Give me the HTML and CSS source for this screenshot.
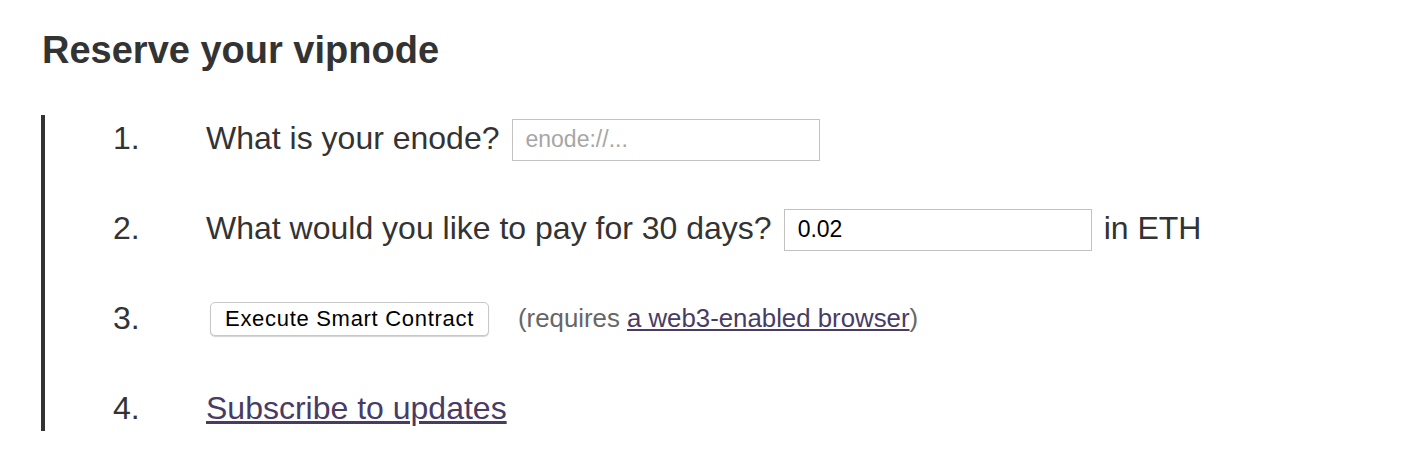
FILE: index.html
```html
<!DOCTYPE html>
<html lang="en">
<head>
    <meta charset="UTF-8">
    <meta name="viewport" content="width=device-width, initial-scale=1.0">
    <title>Reserve your vipnode</title>
    <link rel="stylesheet" href="styles.css">
</head>
<body>
    <div class="page">
        <h1>Reserve your vipnode</h1>
        <ol class="steps">
            <li class="step">
                <span class="step-num">1.</span>
                <div class="step-body">
                    <label for="enode">What is your enode?</label>
                    <input type="text" id="enode" class="field" placeholder="enode://...">
                </div>
            </li>
            <li class="step">
                <span class="step-num">2.</span>
                <div class="step-body">
                    <label for="amount">What would you like to pay for 30 days?</label>
                    <input type="text" id="amount" class="field" value="0.02">
                    <span>in ETH</span>
                </div>
            </li>
            <li class="step">
                <span class="step-num">3.</span>
                <div class="step-body">
                    <button class="btn">Execute Smart Contract</button>
                    <span class="note">(requires <a href="#">a web3-enabled browser</a>)</span>
                </div>
            </li>
            <li class="step">
                <span class="step-num">4.</span>
                <div class="step-body">
                    <a href="#">Subscribe to updates</a>
                </div>
            </li>
        </ol>
    </div>
</body>
</html>
```

FILE: styles.css
```css
body {
    margin: 0;
    font-family: "Liberation Sans", Helvetica, Arial, sans-serif;
    color: #333;
    background: #fff;
}
.page {
    padding: 28px 0 0 42px;
}
h1 {
    margin: 0 0 43px;
    font-size: 38px;
    line-height: 44px;
    font-weight: bold;
}
a {
    color: #483c64;
    text-decoration: underline;
}
.steps {
    list-style: none;
    margin: 0 0 0 -1px;
    padding: 1px 0;
    border-left: 4px solid #333;
    display: flex;
    flex-direction: column;
    gap: 46px;
}
.step {
    display: flex;
    align-items: center;
    height: 44px;
    font-size: 32px;
    line-height: 44px;
}
.step-num {
    width: 93px;
    padding-left: 68px;
    flex-shrink: 0;
}
.step-body {
    display: flex;
    align-items: center;
    gap: 12px;
    white-space: nowrap;
}
.field {
    box-sizing: border-box;
    width: 308px;
    height: 42px;
    margin-top: 3px;
    padding: 0 13px;
    border: 1px solid #c2c2c2;
    border-radius: 0;
    font-family: "Liberation Sans", Helvetica, Arial, sans-serif;
    font-size: 23px;
    color: #000;
    outline: none;
}
.field::placeholder {
    color: #a6a6a6;
}
.btn {
    box-sizing: border-box;
    height: 34px;
    width: 279px;
    margin: 2px 0 0 4px;
    padding: 0;
    background: #fff;
    border: 1px solid #c8c8c8;
    border-radius: 5px;
    box-shadow: 0 1px 1px rgba(0, 0, 0, 0.18);
    font-family: "Liberation Sans", Helvetica, Arial, sans-serif;
    font-size: 22px;
    letter-spacing: 0.7px;
    color: #000;
}
.note {
    margin-left: 17px;
    font-size: 25.8px;
    color: #666;
}
```
